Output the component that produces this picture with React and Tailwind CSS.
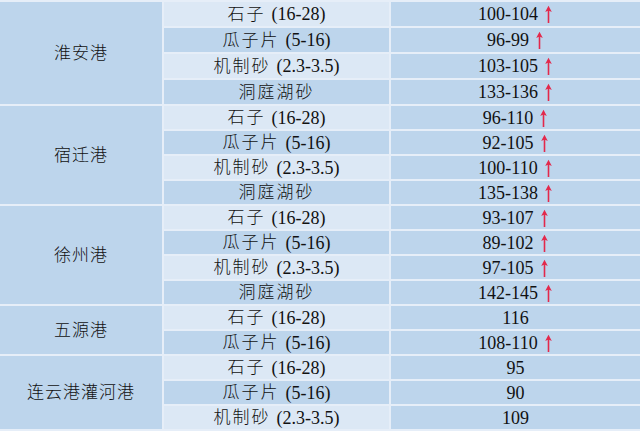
import React from 'react';

const groups = [
  {
    port: '淮安港',
    h: 'h-[24px]',
    rows: [
      ['石子', '(16-28)', '100-104', true],
      ['瓜子片', '(5-16)', '96-99', true],
      ['机制砂', '(2.3-3.5)', '103-105', true],
      ['洞庭湖砂', '', '133-136', true],
    ],
  },
  {
    port: '宿迁港',
    h: 'h-[23px]',
    rows: [
      ['石子', '(16-28)', '96-110', true],
      ['瓜子片', '(5-16)', '92-105', true],
      ['机制砂', '(2.3-3.5)', '100-110', true],
      ['洞庭湖砂', '', '135-138', true],
    ],
  },
  {
    port: '徐州港',
    h: 'h-[23px]',
    rows: [
      ['石子', '(16-28)', '93-107', true],
      ['瓜子片', '(5-16)', '89-102', true],
      ['机制砂', '(2.3-3.5)', '97-105', true],
      ['洞庭湖砂', '', '142-145', true],
    ],
  },
  {
    port: '五源港',
    h: 'h-[23px]',
    rows: [
      ['石子', '(16-28)', '116', false],
      ['瓜子片', '(5-16)', '108-110', true],
    ],
  },
  {
    port: '连云港灌河港',
    h: 'h-[23px]',
    rows: [
      ['石子', '(16-28)', '95', false],
      ['瓜子片', '(5-16)', '90', false],
      ['机制砂', '(2.3-3.5)', '109', false],
    ],
  },
];

const font = { fontFamily: '"Liberation Serif", "Noto Sans CJK SC", serif' };

const UpArrow = () => (
  <svg width="9" height="18" viewBox="0 0 9 18" className="ml-[6px] shrink-0">
    <line x1="4.5" y1="5" x2="4.5" y2="18" stroke="#e3284b" strokeWidth="1.6" />
    <path d="M1.2 7 L4.5 0.8 L7.8 7 L4.5 5.4 Z" fill="#e3284b" />
  </svg>
);

export default function App() {
  return (
    <div
      className="w-[640px] h-[431px] overflow-hidden bg-[#e6eef8] pt-[2px] flex flex-col gap-[2px] text-[#111] text-[18px] leading-none"
      style={font}
    >
      {groups.map((g) => (
        <div key={g.port} className="flex gap-[2px]">
          <div className="w-[162px] shrink-0 bg-[#bdd5ec] flex items-center justify-center tracking-[1px] text-[17px] font-light">
            {g.port}
          </div>
          <div className="flex-1 flex flex-col gap-[2px]">
            {g.rows.map(([name, spec, price, up], i) => (
              <div key={name} className={`flex gap-[2px] ${g.h}`}>
                <div
                  className={`w-[225px] shrink-0 flex items-center justify-center ${
                    i % 2 === 0 ? 'bg-[#dce8f5]' : 'bg-[#bdd5ec]'
                  }`}
                >
                  <span className="tracking-[2px] text-[17px] font-light">{name}</span>
                  {spec && <span className="ml-[6px]">{spec}</span>}
                </div>
                <div className="flex-1 bg-[#bdd5ec] flex items-center justify-center">
                  <span>{price}</span>
                  {up && <UpArrow />}
                </div>
              </div>
            ))}
          </div>
        </div>
      ))}
    </div>
  );
}
